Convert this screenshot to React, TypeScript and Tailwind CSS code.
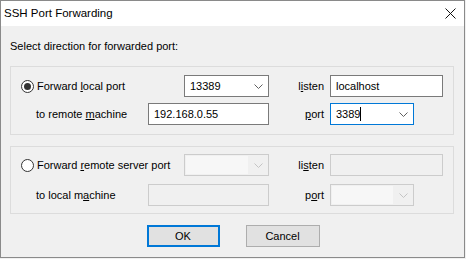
import React from "react";

function Chevron({ disabled }: { disabled?: boolean }) {
  return (
    <svg width="9" height="5" viewBox="0 0 9 5" className="block">
      <path d="M0.5 0.5 L4.5 4.5 L8.5 0.5" fill="none" stroke={disabled ? "#c4c4c4" : "#606060"} strokeWidth="1" />
    </svg>
  );
}

function Combo({ w, value, focused, disabled, caret }: { w: string; value?: string; focused?: boolean; disabled?: boolean; caret?: boolean }) {
  const border = focused ? "border-[#0078d7]" : disabled ? "border-[#cccccc]" : "border-[#7a7a7a]";
  return (
    <div className={`${w} h-[22px] border ${border} ${disabled ? "bg-[#f0f0f0]" : "bg-white"} flex items-stretch`}>
      {disabled ? (
        <div className="flex-1 m-[1px] bg-[#f7f7f7]" />
      ) : (
        <div className="flex-1 flex items-center pl-[5px] text-black">
          <span>{value}</span>
          {caret && <span className="w-[1px] h-[14px] bg-black" />}
        </div>
      )}
      <div className="w-[19px] flex items-center justify-center shrink-0">
        <Chevron disabled={disabled} />
      </div>
    </div>
  );
}

function TextBox({ w, value, disabled }: { w: string; value?: string; disabled?: boolean }) {
  return (
    <div
      className={`${w} h-[22px] border ${disabled ? "border-[#cccccc] bg-[#f0f0f0]" : "border-[#7a7a7a] bg-white"} flex items-center pl-[5px] text-black`}
    >
      {value}
    </div>
  );
}

function Radio({ checked }: { checked?: boolean }) {
  return (
    <div className="w-[13px] h-[13px] rounded-full border border-[#333333] bg-white flex items-center justify-center shrink-0">
      {checked && <div className="w-[7px] h-[7px] rounded-full bg-[#333333]" />}
    </div>
  );
}

function Label({ children }: { children: React.ReactNode }) {
  return <div className="w-[61px] pr-[6px] text-right text-black">{children}</div>;
}

export default function App() {
  return (
    <div className="w-[466px] h-[259px] bg-[#f0f0f0] font-['Liberation_Sans',Arial,sans-serif] text-[11px] leading-[13px] text-black">
      <div className="w-[465px] h-[258px] border border-[#8a8a8a] flex flex-col bg-[#f0f0f0]">
        <div className="h-[25px] bg-white flex items-center justify-between pl-[3px] pr-[8px] shrink-0">
          <span className="text-[11.5px] text-black">SSH Port Forwarding</span>
          <svg width="11" height="11" viewBox="0 0 11 11" className="mr-[0px]">
            <path d="M0.5 0.5 L10.5 10.5 M10.5 0.5 L0.5 10.5" stroke="#111" strokeWidth="1" />
          </svg>
        </div>
        <div className="flex-1 flex flex-col">
          <div className="h-[16px] mt-[12px] pl-[9px] flex items-center">Select direction for forwarded port:</div>

          <div className="mt-[12px] ml-[9px] w-[444px] h-[69px] border border-[#dcdcdc] flex flex-col pt-[8px]">
            <div className="flex items-center h-[22px]">
              <div className="w-[173px] pl-[10px] flex items-center gap-[3px]">
                <Radio checked />
                <span>
                  Forward <span className="underline">l</span>ocal port
                </span>
              </div>
              <Combo w="w-[85px]" value="13389" />
              <Label>
                l<span className="underline">i</span>sten
              </Label>
              <TextBox w="w-[113px]" value="localhost" />
            </div>
            <div className="flex items-center h-[22px] mt-[6px]">
              <div className="w-[137px] pl-[25px]">
                to remote <span className="underline">m</span>achine
              </div>
              <TextBox w="w-[121px]" value="192.168.0.55" />
              <Label>
                <span className="underline">p</span>ort
              </Label>
              <Combo w="w-[84px]" value="3389" focused caret />
            </div>
          </div>

          <div className="mt-[11px] ml-[9px] w-[444px] h-[68px] border border-[#dcdcdc] flex flex-col pt-[7px]">
            <div className="flex items-center h-[22px]">
              <div className="w-[173px] pl-[10px] flex items-center gap-[3px]">
                <Radio />
                <span>
                  Forward <span className="underline">r</span>emote server port
                </span>
              </div>
              <Combo w="w-[85px]" disabled />
              <Label>
                li<span className="underline">s</span>ten
              </Label>
              <TextBox w="w-[113px]" disabled />
            </div>
            <div className="flex items-center h-[22px] mt-[8px]">
              <div className="w-[137px] pl-[25px]">
                to local m<span className="underline">a</span>chine
              </div>
              <TextBox w="w-[121px]" disabled />
              <Label>
                p<span className="underline">o</span>rt
              </Label>
              <Combo w="w-[84px]" disabled />
            </div>
          </div>

          <div className="mt-[11px] flex justify-center gap-[26px] pl-[1px]">
            <div className="w-[73px] h-[22px] border-2 border-[#0078d7] bg-[#e1e1e1] flex items-center justify-center">OK</div>
            <div className="w-[74px] h-[22px] border border-[#adadad] bg-[#e1e1e1] flex items-center justify-center">Cancel</div>
          </div>
        </div>
      </div>
    </div>
  );
}
